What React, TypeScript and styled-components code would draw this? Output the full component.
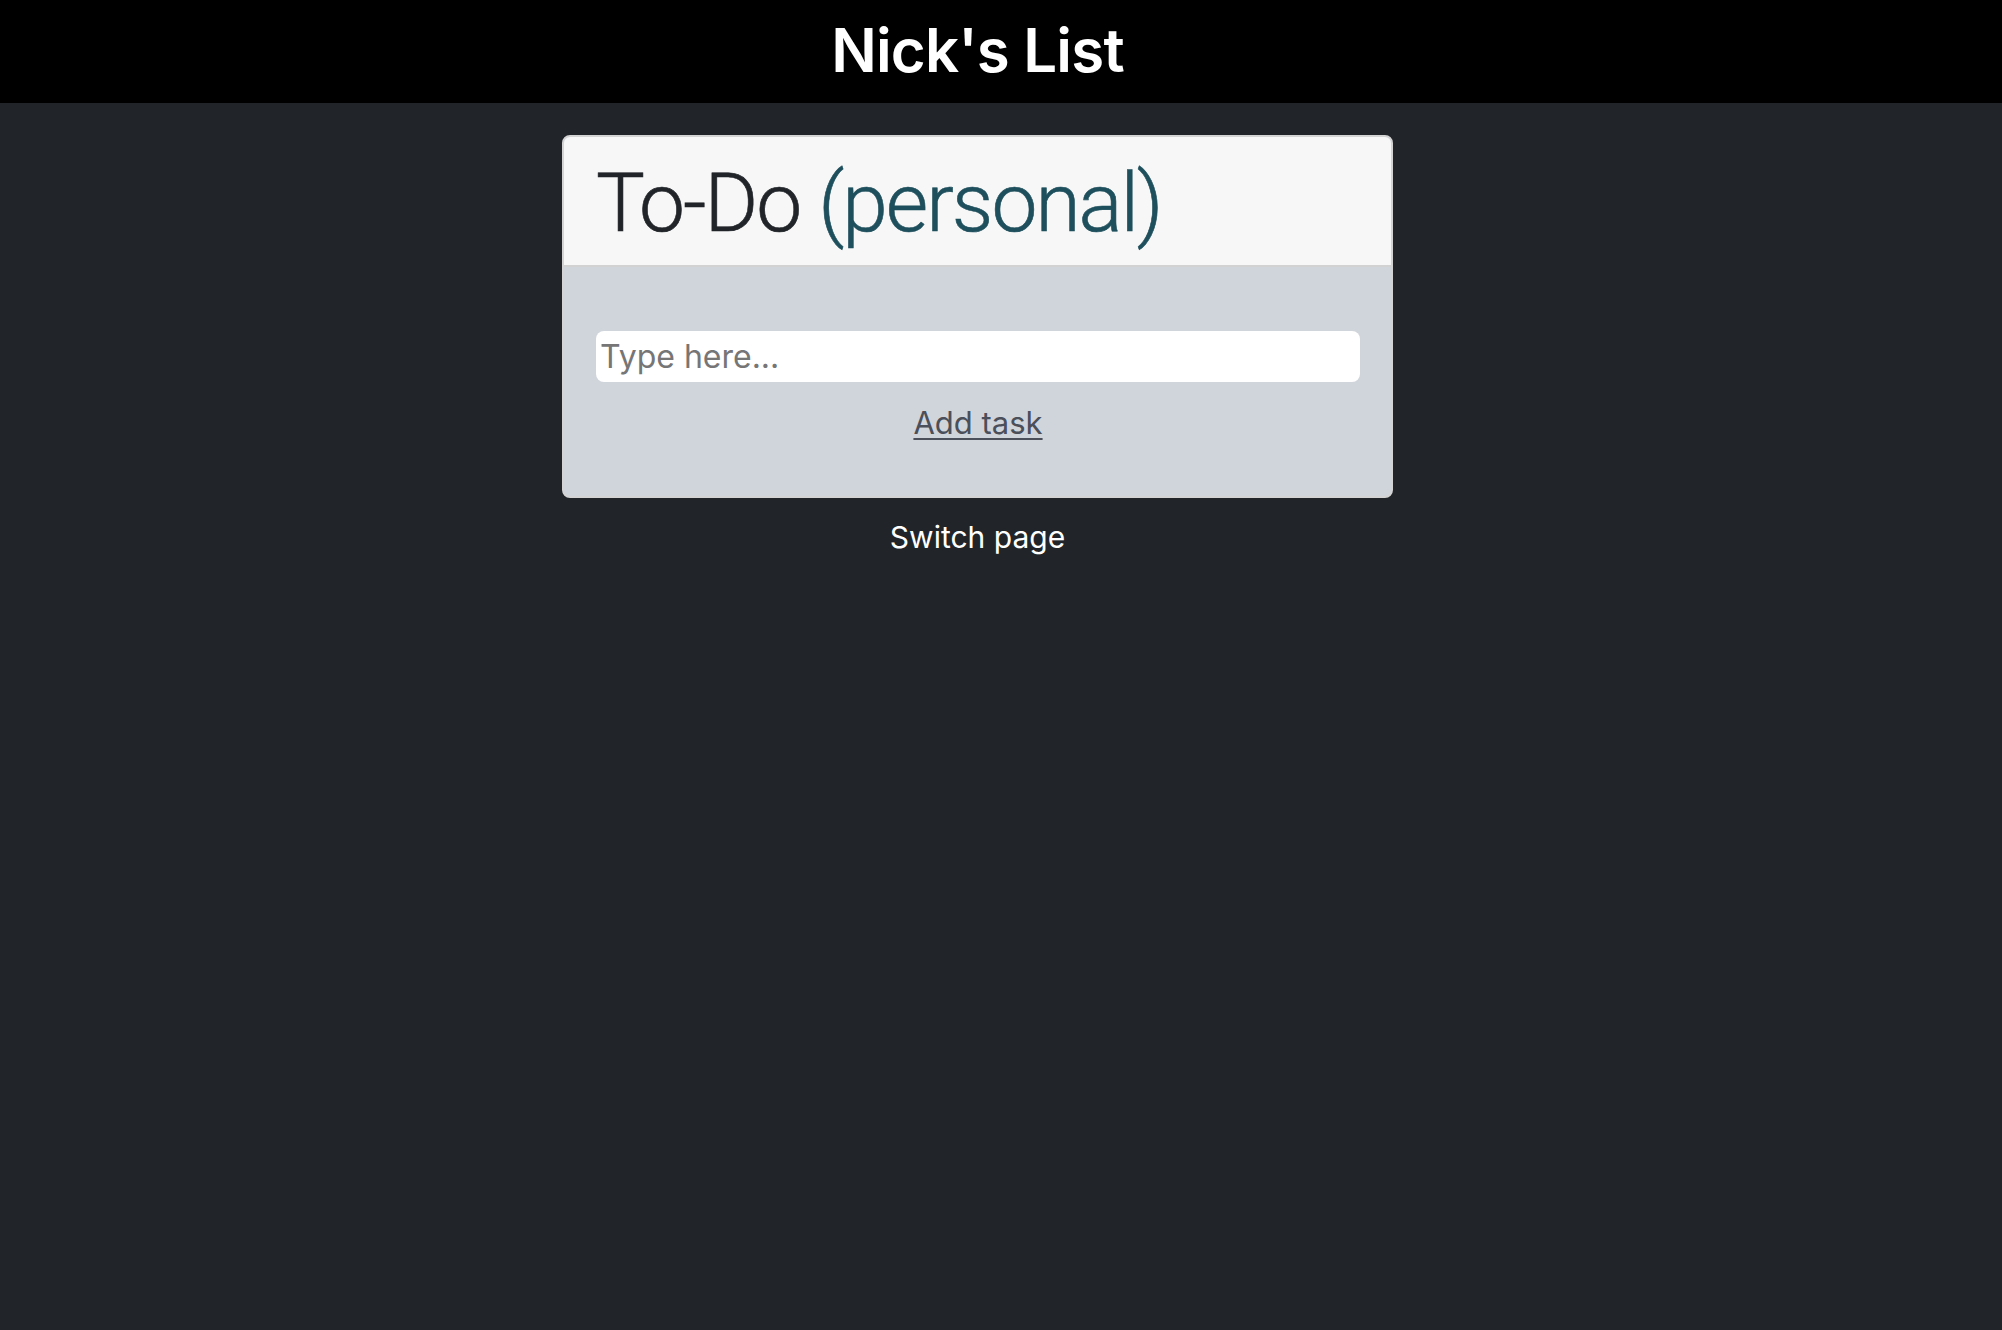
import React, { useState } from 'react';
import styled, { createGlobalStyle } from 'styled-components';

const GlobalStyle = createGlobalStyle`
  html, body {
    margin: 0;
    padding: 0;
    background: #212529;
    font-family: Inter, "Liberation Sans", Arial, sans-serif;
  }
`;

const Page = styled.div`
  min-height: 1330px;
  background: #212529;
`;

const TopBar = styled.header`
  height: 103px;
  background: #000;
  padding: 14px 47px 0 0;
  box-sizing: border-box;
  text-align: center;
`;

const Brand = styled.h1`
  margin: 0;
  color: #fff;
  font-size: 60px;
  font-weight: 600;
  line-height: 1.2;
  letter-spacing: -0.8px;
`;

const Main = styled.main`
  display: flex;
  flex-direction: column;
  align-items: center;
  padding: 32px 47px 0 0;
`;

const Card = styled.section`
  width: 831px;
  box-sizing: border-box;
  border: 2px solid #d4d4d4;
  border-radius: 8px;
  overflow: hidden;
  background: #d0d4db;
`;

const CardHeader = styled.div`
  background: #f7f7f7;
  border-bottom: 2px solid #d2d2d2;
  padding: 17px 32px 0;
  height: 130px;
  box-sizing: border-box;
`;

const Title = styled.h2`
  margin: 0;
  font-family: Roboto, "Liberation Sans", Arial, sans-serif;
  font-size: 82px;
  font-weight: 300;
  line-height: 1.2;
  letter-spacing: -2px;
  color: #212529;
  white-space: nowrap;
  -webkit-text-stroke: 0.6px currentColor;
`;

const Tag = styled.span`
  color: #1e4f5c;
`;

const CardBody = styled.div`
  padding: 64px 31px 49px 32px;
  display: flex;
  flex-direction: column;
  align-items: center;
`;

const TaskInput = styled.input`
  width: 100%;
  height: 51px;
  box-sizing: border-box;
  border: none;
  border-radius: 8px;
  background: #fff;
  padding: 0 4px;
  font-family: inherit;
  font-size: 32px;
  color: #212529;
  outline: none;

  &::placeholder {
    color: #767676;
  }
`;

const LinkButton = styled.button<{ $light?: boolean }>`
  margin-top: ${(p) => (p.$light ? '17px' : '18px')};
  background: none;
  border: none;
  padding: 0;
  font-family: inherit;
  font-size: ${(p) => (p.$light ? '30px' : '31px')};
  line-height: 1.5;
  color: ${(p) => (p.$light ? '#fff' : '#4a4f59')};
  text-decoration: ${(p) => (p.$light ? 'none' : 'underline')};
  text-underline-offset: 4px;
  text-decoration-thickness: 2px;
  cursor: pointer;
`;

const App = () => {
  const [task, setTask] = useState<string>('');

  return (
    <Page>
      <GlobalStyle />
      <TopBar>
        <Brand>Nick's List</Brand>
      </TopBar>
      <Main>
        <Card>
          <CardHeader>
            <Title>
              To-Do <Tag>(personal)</Tag>
            </Title>
          </CardHeader>
          <CardBody>
            <TaskInput
              type="text"
              placeholder="Type here..."
              value={task}
              onChange={(e) => setTask(e.target.value)}
            />
            <LinkButton type="button">Add task</LinkButton>
          </CardBody>
        </Card>
        <LinkButton $light type="button">Switch page</LinkButton>
      </Main>
    </Page>
  );
};

export default App;
